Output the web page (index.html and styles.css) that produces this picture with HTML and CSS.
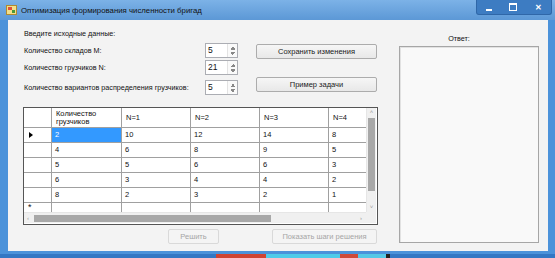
FILE: index.html
```html
<!DOCTYPE html>
<html lang="ru">
<head>
  <meta charset="UTF-8" />
  <title>Оптимизация формирования численности бригад</title>
  <link rel="stylesheet" href="styles.css">
</head>
<body>
  <div class="window">
    <div class="titlebar">
      <svg class="app-icon" width="11" height="10" viewBox="0 0 11 10">
        <rect x="0.5" y="0.5" width="10" height="9" fill="#f4e08a" stroke="#b08a30"/>
        <rect x="2" y="2" width="4" height="3" fill="#e0503a"/>
        <rect x="6" y="5" width="3" height="3" fill="#4a9a3a"/>
      </svg>
      <span class="title">Оптимизация формирования численности бригад</span>
      <div class="controls">
        <span class="ctl-min"></span>
        <span class="ctl-max"></span>
        <span class="ctl-close">✕</span>
      </div>
    </div>

    <div class="frame">
      <div class="client">
        <div class="main">
          <div class="intro">Введите исходные данные:</div>

          <div class="params">
            <label>Количество складов M:</label>
            <div class="spin"><span>5</span><i></i></div>
            <button class="btn">Сохранить изменения</button>

            <label>Количество грузчиков N:</label>
            <div class="spin"><span>21</span><i></i></div>
            <span></span>

            <label>Количество вариантов распределения грузчиков:</label>
            <div class="spin"><span>5</span><i></i></div>
            <button class="btn btn-up">Пример задачи</button>
          </div>

          <div class="grid">
            <div class="viewport">
              <div class="row head">
                <div class="rh"></div>
                <div class="cell wrap">Количество грузчиков</div>
                <div class="cell">N=1</div>
                <div class="cell">N=2</div>
                <div class="cell">N=3</div>
                <div class="cell">N=4</div>
              </div>
              <div class="row">
                <div class="rh"><span class="current"></span></div>
                <div class="cell selected">2</div>
                <div class="cell">10</div>
                <div class="cell">12</div>
                <div class="cell">14</div>
                <div class="cell">8</div>
              </div>
              <div class="row">
                <div class="rh"></div>
                <div class="cell">4</div>
                <div class="cell">6</div>
                <div class="cell">8</div>
                <div class="cell">9</div>
                <div class="cell">5</div>
              </div>
              <div class="row">
                <div class="rh"></div>
                <div class="cell">5</div>
                <div class="cell">5</div>
                <div class="cell">6</div>
                <div class="cell">6</div>
                <div class="cell">3</div>
              </div>
              <div class="row">
                <div class="rh"></div>
                <div class="cell">6</div>
                <div class="cell">3</div>
                <div class="cell">4</div>
                <div class="cell">4</div>
                <div class="cell">2</div>
              </div>
              <div class="row">
                <div class="rh"></div>
                <div class="cell">8</div>
                <div class="cell">2</div>
                <div class="cell">3</div>
                <div class="cell">2</div>
                <div class="cell">1</div>
              </div>
              <div class="row">
                <div class="rh newrow">*</div>
                <div class="cell"></div>
                <div class="cell"></div>
                <div class="cell"></div>
                <div class="cell"></div>
                <div class="cell"></div>
              </div>
            </div>
            <div class="vscroll">
              <span class="arr">˄</span>
              <div class="vthumb"></div>
              <span class="arr">˅</span>
            </div>
            <div class="hscroll">
              <span class="arr">‹</span>
              <div class="hthumb"></div>
              <span class="arr arr-right">›</span>
            </div>
            <div class="corner"></div>
          </div>

          <div class="actions">
            <button class="btn disabled solve">Решить</button>
            <button class="btn disabled steps">Показать шаги решения</button>
          </div>
        </div>

        <div class="answer">
          <div class="answer-label">Ответ:</div>
          <div class="answer-box"></div>
        </div>
      </div>
    </div>
    <div class="taskbar"></div>
  </div>
</body>
</html>
```

FILE: styles.css
```css
body {
  margin: 0;
  width: 555px;
  height: 258px;
  overflow: hidden;
  font-family: 'Liberation Sans', Arial, sans-serif;
  font-size: 7.2px;
  color: #111;
  background: #3f8ad4;
}
.window {
  display: flex;
  flex-direction: column;
  height: 258px;
}
.titlebar {
  height: 20px;
  display: flex;
  align-items: center;
  padding-left: 6px;
  background: linear-gradient(#7cb2e7, #5c98d6);
  position: relative;
}
.app-icon {
  margin-right: 4px;
}
.title {
  font-size: 7.8px;
  color: #111;
}
.controls {
  position: absolute;
  right: 3px;
  top: 0;
  width: 74px;
  height: 14px;
  display: flex;
  align-items: center;
  justify-content: space-around;
  background: #3d7cc2;
  border: 1px solid #2f67a8;
  border-top: none;
  border-radius: 0 0 3px 3px;
}
.ctl-min {
  width: 6px;
  height: 2px;
  background: #fff;
  margin-top: 5px;
}
.ctl-max {
  width: 6px;
  height: 5px;
  border: 1px solid #fff;
  border-top-width: 2px;
}
.ctl-close {
  color: #fff;
  font-size: 8px;
  font-weight: bold;
}
.frame {
  padding: 0 7px 3px 8px;
  background: #4b92da;
}
.client {
  height: 231px;
  display: flex;
  background: #f3f3f3;
}
.main {
  width: 376px;
  padding-left: 15px;
  flex-shrink: 0;
}
.intro {
  margin-top: 9px;
  padding-left: 1px;
  line-height: 10px;
}
.params {
  margin-top: 4px;
  display: grid;
  grid-template-columns: 182px 33px auto;
  grid-template-rows: 17px 20px 15px;
}
.params label {
  padding-left: 1px;
  line-height: 15px;
  white-space: nowrap;
}
.spin {
  height: 15px;
  box-sizing: border-box;
  border: 1px solid #abadb3;
  background: #fff;
  display: flex;
  justify-content: space-between;
  line-height: 13px;
  padding-left: 2px;
  font-size: 8.5px;
}
.spin i {
  width: 9px;
  border-left: 1px solid #e3e3e3;
  background:
    linear-gradient(135deg, transparent 50%, #888 50%) 2px 3px / 3px 3px no-repeat,
    linear-gradient(225deg, transparent 50%, #888 50%) 5px 3px / 3px 3px no-repeat,
    linear-gradient(45deg, transparent 50%, #888 50%) 2px 8px / 3px 3px no-repeat,
    linear-gradient(315deg, transparent 50%, #888 50%) 5px 8px / 3px 3px no-repeat,
    #fafafa;
}
.btn {
  width: 121px;
  height: 15px;
  margin: 1px 0 0 18px;
  padding: 0;
  box-sizing: border-box;
  border: 1px solid #acacac;
  border-radius: 2px;
  background: linear-gradient(#f6f6f6, #e8e8e8);
  font-family: inherit;
  font-size: 7.5px;
  color: #1a1a1a;
  align-self: start;
}
.btn-up {
  margin-top: -3px;
}
.grid {
  margin-top: 12px;
  width: 355px;
  height: 118px;
  box-sizing: border-box;
  border: 1px solid #555;
  display: grid;
  grid-template-columns: 342px 10px;
  grid-template-rows: 104px 11px;
  background: #fff;
}
.viewport {
  overflow: hidden;
  background: #fff;
}
.row {
  display: grid;
  grid-template-columns: 28px 70px 69px 69px 69px 69px;
  height: 15px;
  width: 374px;
}
.row.head {
  height: 20px;
}
.rh, .cell {
  box-sizing: border-box;
  border-right: 1px solid #a0a0a0;
  border-bottom: 1px solid #a0a0a0;
  line-height: 14px;
  padding-left: 3px;
  white-space: nowrap;
  overflow: hidden;
  font-size: 7.5px;
}
.head .cell {
  line-height: 19px;
  padding-left: 4px;
}
.head .cell.wrap {
  white-space: normal;
  line-height: 8px;
  padding-top: 2px;
}
.cell.selected {
  background: #3399ff;
  color: #fff;
}
.rh {
  position: relative;
}
.current {
  position: absolute;
  left: 5px;
  top: 4px;
  border-left: 4px solid #000;
  border-top: 3px solid transparent;
  border-bottom: 3px solid transparent;
}
.rh.newrow {
  font-size: 9px;
  padding-left: 4px;
  line-height: 9px;
}
.vscroll {
  display: flex;
  flex-direction: column;
  align-items: center;
  background: #f0f0f0;
  border-left: 1px solid #e6e6e6;
}
.vthumb {
  width: 7px;
  flex: 1;
  margin: 1px 0 12px;
  background: #a8a8a8;
}
.arr {
  font-size: 6px;
  line-height: 9px;
  color: #9a9a9a;
}
.hscroll {
  display: flex;
  align-items: center;
  background: #f0f0f0;
  border-top: 1px solid #e6e6e6;
  padding-left: 3px;
}
.hthumb {
  width: 237px;
  height: 7px;
  margin-left: 5px;
  background: #a8a8a8;
}
.arr-right {
  margin-left: auto;
  margin-right: 4px;
}
.corner {
  background: #f0f0f0;
}
.actions {
  display: flex;
  margin-top: 4px;
  padding-left: 145px;
}
.btn.disabled {
  margin: 0;
  color: #a5a5a5;
  border-color: #d9d9d9;
  background: #f4f4f4;
}
.solve {
  width: 51px;
}
.btn.steps {
  width: 105px;
  margin-left: 53px;
}
.answer {
  width: 140px;
}
.answer-label {
  margin-top: 14px;
  line-height: 10px;
  text-align: center;
  padding-right: 20px;
}
.answer-box {
  margin-top: 2px;
  height: 197px;
  box-sizing: border-box;
  border: 1px solid #a6a6a6;
  box-shadow: inset 1px 1px 0 #e2e2e2;
  background: #f9f9f9;
}
.taskbar {
  height: 4px;
  background: linear-gradient(to right,
    #3377c4 0, #3377c4 216px,
    #cf4433 216px, #cf4433 266px,
    #4fcbe9 266px, #4fcbe9 340px,
    #cf4a3a 340px, #cf4a3a 358px,
    #55c8e6 358px, #55c8e6 386px,
    #222 386px, #222 390px,
    #3377c4 390px);
}
```
